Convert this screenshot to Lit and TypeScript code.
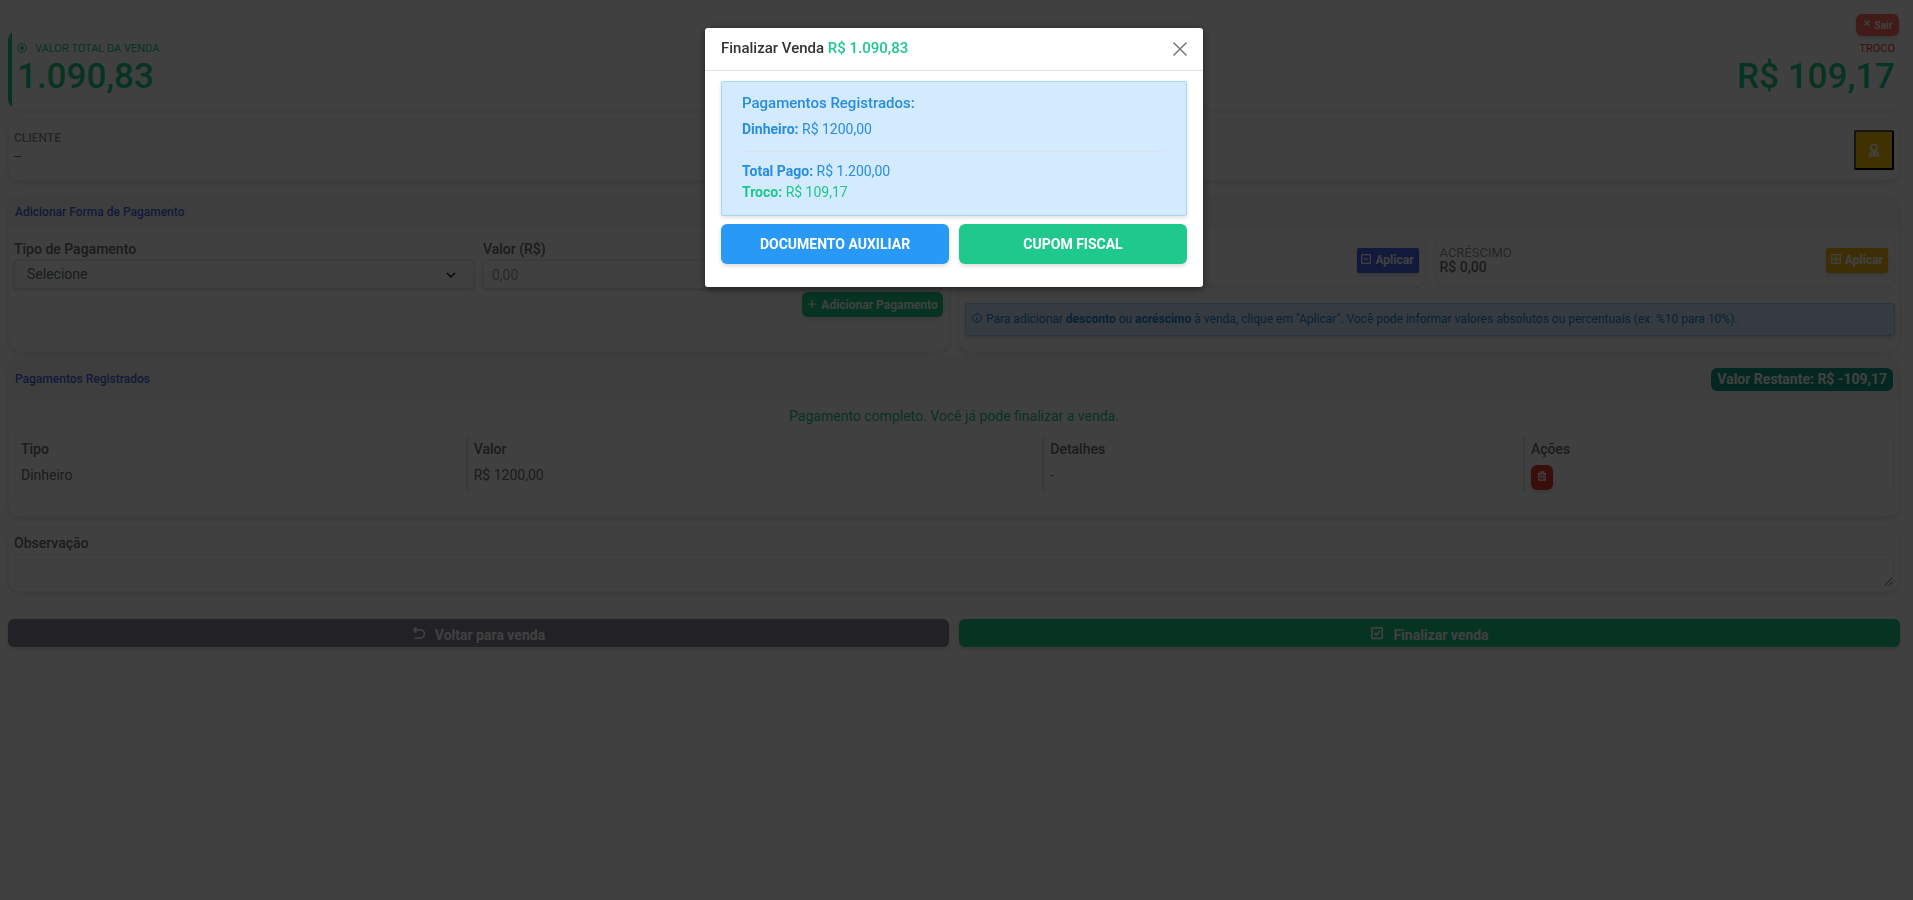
import { LitElement, html, css, svg } from "lit";
import { customElement } from "lit/decorators.js";

const icons: Record<string, unknown> = {
  coin: svg`<circle cx="8" cy="8" r="7"/><circle cx="8" cy="8" r="2.5"/><path d="M8 3.500v9M6 6l4 4M10 6l-4 4"/>`,
  close: svg`<path d="M3 3l10 10M13 3L3 13"/>`,
  user: svg`<circle cx="8" cy="5" r="3.4"/><path d="M2.800 14.500c0-3 2-4.500 5.200-4.500s5.200 1.500 5.200 4.500zM6.500 10.500l1.500 2 1.500-2M8 12v2"/>`,
  plus: svg`<path d="M8 2v12M2 8h12"/>`,
  minusBox: svg`<rect x="1" y="1" width="14" height="14" rx="1"/><path d="M4.500 8h7"/>`,
  plusBox: svg`<rect x="1" y="1" width="14" height="14" rx="1"/><path d="M8 2v12M2 8h12"/>`,
  info: svg`<circle cx="8" cy="8" r="7"/><path d="M8 7v5M8 4v1.500"/>`,
  trash: svg`<path d="M1.500 4h13M5.500 4V1.500h5V4M3 4v10.500h10V4M6.300 6.500v5.500M9.700 6.500v5.500"/>`,
  undo: svg`<path d="M5 1.500L2 4.500l3 3M2 4.500h7.500a4.700 4.700 0 0 1 0 9.400H3"/>`,
  check: svg`<rect x="2" y="2" width="12" height="12" rx="1"/><path d="M4.800 8l2.500 2.400 4-5"/>`,
};

const icon = (name: string) =>
  html`<svg class="icon ${name}" viewBox="0 0 16 16" aria-hidden="true">${icons[name]}</svg>`;

@customElement("app-root")
export class AppRoot extends LitElement {
  static styles = css`
    :host {
      display: block;
      min-height: 100vh;
      background: #fff;
      color: #6b7074;
      font: 400 14px/21px Roboto, sans-serif;
      --green: #1dc98a;
    }
    *, *::before, *::after { box-sizing: border-box; }
    h1, h2, p, dl, dd { margin: 0; font-weight: 400; }
    button, input, select, textarea { font: inherit; color: inherit; margin: 0; }
    button { border: 0; cursor: pointer; }
    .icon { width: 12px; height: 12px; fill: none; stroke: currentColor; stroke-width: 1.5; flex: none; }
    .page { padding: 14px 13px 0 8px; }
    .row { display: flex; align-items: center; justify-content: space-between; }
    .card { background: #fff; border: 1px solid #f4f5f6; border-radius: 12px; box-shadow: 0 2px 5px rgba(0, 0, 0, .1); }
    .btn {
      display: inline-flex; align-items: center; justify-content: center; gap: 4px;
      padding: 0 5px; height: 25px; border-radius: 6px; white-space: nowrap;
      color: #fff; font-weight: 700; font-size: 12px;
      box-shadow: 0 2px 4px rgba(0, 0, 0, .15);
    }
    .btn .icon { margin-bottom: 4px; }
    .exit { display: flex; justify-content: flex-end; margin-right: 1px; }
    .exit .btn { height: 22px; width: 43px; background: #ff6b61; font-size: 10px; }
    .exit .icon { width: 8px; height: 8px; stroke-width: 3; }

    .totals { height: 81px; margin-top: -7px; padding: 10px 5px 0 9px; align-items: flex-start; border: 0;
      background: linear-gradient(var(--green), var(--green)) left / 4px 100% no-repeat #fff;
      box-shadow: 0 2px 4px rgba(0, 0, 0, .06); }
    .totals .label { display: flex; align-items: center; gap: 8px; font-size: 11px; line-height: 20px; color: var(--green); }
    .totals .coin { width: 10px; height: 10px; margin-bottom: 3px; }
    .totals .value { font-size: 35px; line-height: 35px; font-weight: 500; color: var(--green); }
    .totals .change { text-align: right; }
    .totals .change .label { justify-content: flex-end; color: #f44336; }

    .client { height: 62px; margin-top: 9px; padding: 0 5px; }
    .client dt { font-size: 12px; line-height: 18px; font-weight: 500; color: #8f969c; }
    .client dd { line-height: 18px; }
    .client dl { padding-bottom: 6px; }
    .client button { width: 40px; height: 40px; display: grid; place-items: center; background: #ffc107; color: #fff;
      border: 2px outset #000; border-radius: 2px; }
    .client button .icon { width: 14px; height: 14px; stroke-width: 2; }

    .columns { display: grid; grid-template-columns: 1fr 1fr; gap: 10px; margin-top: 14px; }
    .head { background: #f8f8fa; border-radius: 12px 12px 0 0; padding: 0 6px; }
    .head h2 { font-size: 12px; line-height: 32px; font-weight: 500; color: #4a6ade; }
    .payment { height: 157px; }
    .form { display: grid; grid-template-columns: 460px 1fr; column-gap: 9px; padding: 11px 5px 0; }
    .form label, .note label { display: block; font-weight: 500; line-height: 21px; }
    .field { display: block; width: 100%; height: 29px; border: 1px solid #e9ecef; border-radius: 4px; background: #fff;
      box-shadow: 0 1px 3px rgba(0, 0, 0, .2); }
    .select { position: relative; }
    select.field { appearance: none; padding: 0 12px; }
    .select svg { position: absolute; right: 18px; top: 10px; width: 10px; height: 10px; fill: none; stroke: #222; stroke-width: 1.5; pointer-events: none; }
    input.field { padding: 0 8px; }
    input.field::placeholder { color: #9da3a8; opacity: 1; }
    .add { grid-column: 2; justify-self: end; margin-top: 3px; width: 141px; padding-top: 2px; background: var(--green); }
    .add .icon { width: 10px; height: 10px; stroke-width: 2; }

    .adjust .head { height: 34px; }
    .boxes { display: grid; grid-template-columns: 1fr 1fr; gap: 10px; padding: 5px 5px 0; }
    .box { height: 51px; padding: 0 5px 0 4px; border-radius: 8px; box-shadow: 0 1px 3px rgba(0, 0, 0, .1); }
    .box dl { padding-bottom: 2px; }
    .box dt { font-size: 13px; line-height: 15px; color: #8f969c; }
    .box dd { font-size: 14px; line-height: 15px; font-weight: 500; }
    .box .btn { border-radius: 2px; width: 62px; }
    .box .icon { width: 10px; height: 10px; stroke-width: 2; }
    .discount { background: #4a6aea; }
    .surcharge { background: #f5b91a; }
    .hint { display: flex; align-items: center; gap: 4px; height: 33px; margin: 17px 4px 0 5px; padding: 0 6px; font-size: 12px;
      color: #2689dc; background: #d4eafe; border: 1px solid #a4d5fb; border-radius: 2px; box-shadow: 0 2px 4px rgba(0, 0, 0, .15); }
    .hint .icon { margin-bottom: 4px; width: 10px; height: 10px; }

    .registered { height: 160px; margin-top: 5px; }
    .registered .head { height: 42px; }
    .badge { background: #12a085; color: #fff; font-weight: 700; line-height: 23px; padding: 0 6px; border-radius: 6px; }
    .done { text-align: center; color: var(--green); line-height: 20px; padding: 6px 0 11px; }
    .table-wrap { padding: 0 5px; }
    table { width: 100%; border-collapse: separate; border-spacing: 0; table-layout: fixed; border-left: 1px solid #e9ecef; border-right: 1px solid #e9ecef; }
    th, td { text-align: left; vertical-align: top; padding: 2px 6px 0; height: 28px; line-height: 20px; }
    th { font-weight: 500; height: 26px; }
    th + th, td + td { border-left: 2px solid #e6e8ea; }
    .c-type { width: 24%; } .c-value { width: 30.7%; } .c-details { width: 25.6%; }
    .remove { width: 22px; height: 25px; padding: 0; background: #e53b2c; }
    .remove .icon { width: 10px; height: 10px; stroke-width: 2; }

    .note { height: 65px; margin-top: 10px; padding: 5px 5px 0; }
    .note textarea { display: block; width: 100%; height: 33px; border: 1px solid #e9ecef; border-radius: 4px; resize: vertical; background: #fff; }

    .actions { display: grid; grid-template-columns: 1fr 1fr; gap: 10px; margin-top: 27px; }
    .actions .btn { height: 28px; padding-top: 4px; font-size: 14px; gap: 9px; }
    .actions .icon { width: 14px; height: 14px; stroke-width: 2; }
    .back { background: #868896; }
    .finish { background: var(--green); }

    .backdrop { position: fixed; inset: 0; display: flex; justify-content: center; align-items: flex-start;
      padding: 28px 5px 0 0; background: rgba(0, 0, 0, .75); }
    .modal { width: 100%; max-width: 498px; padding: 0 0 23px;
      background: #fff; color: #333; border-radius: 3px; box-shadow: 0 2px 8px rgba(0, 0, 0, .5); }
    .modal header { height: 43px; padding: 0 16px; border-bottom: 1px solid #dee2e6; }
    .modal h1 { font-size: 15px; font-weight: 500; line-height: 20px; padding-bottom: 3px; }
    .modal h1 span { color: var(--green); }
    .x { width: 14px; height: 14px; padding: 0; background: none; color: #777; }
    .x svg { display: block; width: 14px; height: 14px; stroke: currentColor; stroke-width: 1.5; }
    .summary { margin: 10px 16px 0; padding: 11px 20px 12px; color: #268ee0; background: #d4eafe;
      border: 1px solid #a4d5fb; border-radius: 2px; box-shadow: 0 2px 4px rgba(0, 0, 0, .12); }
    .summary h2 { font-size: 15px; font-weight: 500; line-height: 21px; margin-bottom: 5px; }
    .summary hr { border: 0; border-top: 1px solid #dee2e6; margin: 11px 0 9px; }
    .summary .good { color: var(--green); }
    .choices { display: grid; grid-template-columns: 1fr 1fr; gap: 10px; padding: 8px 16px 0; }
    .choices .btn { height: 40px; font-size: 14px; }
    .aux { background: #2999f7; }
    .fiscal { background: #1fc98b; }
  `;

  render() {
    return html`
      <main class="page">
        <div class="exit"><button class="btn">${icon("close")} Sair</button></div>
        <section class="card totals row">
          <div>
            <p class="label">${icon("coin")} VALOR TOTAL DA VENDA</p>
            <p class="value">1.090,83</p>
          </div>
          <div class="change">
            <p class="label">TROCO</p>
            <p class="value">R$ 109,17</p>
          </div>
        </section>
        <section class="card client row">
          <dl><dt>CLIENTE</dt><dd>--</dd></dl>
          <button aria-label="Cliente">${icon("user")}</button>
        </section>
        <div class="columns">
          <section class="card payment">
            <div class="head"><h2>Adicionar Forma de Pagamento</h2></div>
            <form class="form" @submit=${(e: Event) => e.preventDefault()}>
              <div>
                <label for="tipo">Tipo de Pagamento</label>
                <div class="select">
                  <select id="tipo" class="field"><option>Selecione</option></select>
                  <svg viewBox="0 0 10 10" aria-hidden="true"><path d="M1 3l4 4 4-4"/></svg>
                </div>
              </div>
              <div>
                <label for="valor">Valor (R$)</label>
                <input id="valor" class="field" placeholder="0,00" />
              </div>
              <button class="btn add">${icon("plus")} Adicionar Pagamento</button>
            </form>
          </section>
          <section class="card adjust">
            <div class="head"></div>
            <div class="boxes">
              <div class="card box row">
                <dl><dt>DESCONTO</dt><dd>R$ 0,00</dd></dl>
                <button class="btn discount">${icon("minusBox")} Aplicar</button>
              </div>
              <div class="card box row">
                <dl><dt>ACRÉSCIMO</dt><dd>R$ 0,00</dd></dl>
                <button class="btn surcharge">${icon("plusBox")} Aplicar</button>
              </div>
            </div>
            <div class="hint">${icon("info")}
              <p>Para adicionar <b>desconto</b> ou <b>acréscimo</b> à venda, clique em "Aplicar". Você pode informar valores absolutos ou percentuais (ex: %10 para 10%).</p>
            </div>
          </section>
        </div>
        <section class="card registered">
          <div class="head row"><h2>Pagamentos Registrados</h2><span class="badge">Valor Restante: R$ -109,17</span></div>
          <p class="done">Pagamento completo. Você já pode finalizar a venda.</p>
          <div class="table-wrap">
            <table>
              <thead><tr><th class="c-type">Tipo</th><th class="c-value">Valor</th><th class="c-details">Detalhes</th><th>Ações</th></tr></thead>
              <tbody><tr><td>Dinheiro</td><td>R$ 1200,00</td><td>-</td>
                <td><button class="btn remove" aria-label="Remover">${icon("trash")}</button></td></tr></tbody>
            </table>
          </div>
        </section>
        <section class="card note">
          <label for="obs">Observação</label>
          <textarea id="obs"></textarea>
        </section>
        <div class="actions">
          <button class="btn back">${icon("undo")} Voltar para venda</button>
          <button class="btn finish">${icon("check")} Finalizar venda</button>
        </div>
      </main>
      <div class="backdrop">
        <div class="modal" role="dialog" aria-modal="true" aria-labelledby="title">
          <header class="row">
            <h1 id="title">Finalizar Venda <span>R$ 1.090,83</span></h1>
            <button class="x" aria-label="Fechar"><svg viewBox="0 0 14 14"><path d="M.5.5l13 13M13.500.5l-13 13"/></svg></button>
          </header>
          <div class="summary">
            <h2>Pagamentos Registrados:</h2>
            <p><b>Dinheiro:</b> R$ 1200,00</p>
            <hr />
            <p><b>Total Pago:</b> R$ 1.200,00</p>
            <p class="good"><b>Troco:</b> R$ 109,17</p>
          </div>
          <div class="choices">
            <button class="btn aux">DOCUMENTO AUXILIAR</button>
            <button class="btn fiscal">CUPOM FISCAL</button>
          </div>
        </div>
      </div>
    `;
  }
}
